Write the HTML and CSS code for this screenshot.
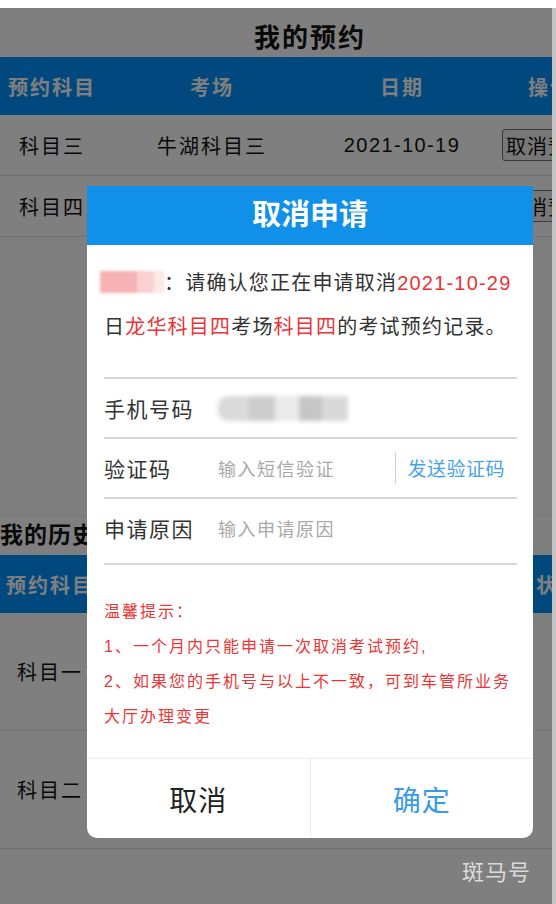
FILE: index.html
```html
<!DOCTYPE html>
<html lang="zh-CN">
<head>
<meta charset="utf-8">
<title>我的预约</title>
<link rel="stylesheet" href="styles.css">
</head>
<body>
<div class="page">
  <div class="content">
    <h2 class="title">我的预约</h2>
    <div class="grid grid-now head">
      <div>预约科目</div><div>考场</div><div>日期</div><div>操作</div>
    </div>
    <div class="grid grid-now row">
      <div>科目三</div><div>牛湖科目三</div><div class="num">2021-10-19</div><div class="op"><button class="btn">取消预约</button></div>
    </div>
    <div class="grid grid-now row">
      <div>科目四</div><div>龙华科目四</div><div class="num">2021-10-29</div><div class="op"><button class="btn">取消预约</button></div>
    </div>

    <section class="history">
      <h3 class="subtitle">我的历史预约</h3>
      <div class="grid grid-hist head">
        <div>预约科目</div><div>考场</div><div>日期</div><div>结果</div><div>状态</div>
      </div>
      <div class="grid grid-hist row tall">
        <div>科目一</div><div>福田科目一</div><div class="num">2021-06-12</div><div>合格</div><div></div>
      </div>
      <div class="grid grid-hist row tall">
        <div>科目二</div><div>牛湖科目二</div><div class="num">2021-08-20</div><div>合格</div><div></div>
      </div>
    </section>
  </div>

  <div class="mask"></div>

  <div class="dialog">
    <div class="dialog-head">取消申请</div>
    <div class="dialog-msg">
      <p><span class="blur-name"></span>：请确认您正在申请取消<span class="red">2021-10-29</span></p>
      <p>日<span class="red">龙华科目四</span>考场<span class="red">科目四</span>的考试预约记录。</p>
    </div>
    <div class="form">
      <div class="field">
        <span class="label">手机号码</span>
        <span class="blur-phone"></span>
      </div>
      <div class="field">
        <span class="label short">验证码</span>
        <span class="placeholder grow">输入短信验证</span>
        <span class="send">发送验证码</span>
      </div>
      <div class="field last">
        <span class="label">申请原因</span>
        <span class="placeholder">输入申请原因</span>
      </div>
    </div>
    <div class="tips">
      <p>温馨提示：</p>
      <p>1、一个月内只能申请一次取消考试预约,</p>
      <p>2、如果您的手机号与以上不一致，可到车管所业务</p>
      <p>大厅办理变更</p>
    </div>
    <div class="actions">
      <div class="act cancel">取消</div>
      <div class="act ok">确定</div>
    </div>
  </div>

  <div class="watermark">斑马号</div>
</div>
</body>
</html>
```

FILE: styles.css
```css
* { box-sizing: border-box; }
html, body { margin: 0; padding: 0; }
body {
  background: #fff;
  font-family: "Liberation Sans", "Noto Sans CJK SC", sans-serif;
  color: #222;
}
p { margin: 0; }

.page {
  position: relative;
  width: 556px;
  height: 896px;
  margin-top: 8px;
  overflow: hidden;
  background: #fff;
  border-right: 4px solid #c4c4c4;
}
.content { width: 620px; }

.title {
  margin: 0;
  padding-top: 11px;
  height: 49px;
  line-height: 38px;
  text-align: center;
  font-size: 26px;
  font-weight: bold;
  letter-spacing: 2px;
  color: #111;
}

.grid { display: grid; align-items: center; }
.grid > div { text-align: center; white-space: nowrap; }
.grid-now { grid-template-columns: 104px 216px 164px 132px; }
.grid-hist { grid-template-columns: 100px 150px 150px 100px 116px; }

.head {
  height: 58px;
  background: #0090fa;
  color: #fff;
  font-size: 20px;
  font-weight: bold;
  letter-spacing: 2px;
}
.row {
  height: 61px;
  border-bottom: 1px solid #e4e4e4;
  font-size: 20px;
  letter-spacing: 2px;
  color: #111;
}
.row .num { letter-spacing: 1.4px; }
.row.tall { height: 118px; }
.grid > .op { text-align: left; padding-left: 18px; }
.btn {
  height: 32px;
  padding: 0 3px;
  font: inherit;
  font-size: 20px;
  letter-spacing: 1px;
  color: #111;
  background: #efefef;
  border: 1px solid #767676;
  border-radius: 3px;
}

.history {
  margin-top: 278px;
  border-top: 1px solid #eaeaea;
}
.subtitle {
  margin: 0;
  height: 39px;
  line-height: 39px;
  font-size: 23px;
  font-weight: bold;
  letter-spacing: 1px;
  color: #111;
}

.mask {
  position: absolute;
  inset: 0;
  background: rgba(0, 0, 0, 0.5);
}

.dialog {
  position: absolute;
  left: 87px;
  top: 178px;
  width: 446px;
  background: #fff;
  border-radius: 0 0 10px 10px;
  overflow: hidden;
}
.dialog-head {
  height: 59px;
  line-height: 59px;
  text-align: center;
  background: #1190ea;
  color: #fff;
  font-size: 29px;
  font-weight: bold;
}
.dialog-msg {
  padding: 16px 10px 0 17px;
  font-size: 20px;
  line-height: 44px;
  letter-spacing: 1.2px;
  color: #333;
  white-space: nowrap;
}
.red { color: #ec3337; }
.blur-name {
  display: inline-block;
  width: 64px;
  height: 22px;
  margin-left: -4px;
  vertical-align: -3px;
  background: linear-gradient(90deg, #f6b2b5 0 58%, #fad0d1 58% 84%, #fde8e8 84%);
  filter: blur(1.5px);
}

.form { margin: 28px 16px 0 17px; }
.field {
  display: flex;
  align-items: center;
  height: 60px;
  border-top: 2px solid #d8d8d8;
}
.field.last {
  height: 68px;
  padding-bottom: 6px;
  border-bottom: 2px solid #d8d8d8;
}
.label {
  width: 114px;
  flex: none;
  font-size: 21px;
  letter-spacing: 1.5px;
  color: #333;
}
.placeholder {
  font-size: 18px;
  letter-spacing: 1.5px;
  color: #a9a9a9;
}
.grow { flex: 1; }
.send {
  height: 32px;
  line-height: 32px;
  padding: 0 12px 2px 11px;
  border-left: 1px solid #cfcfcf;
  font-size: 19px;
  letter-spacing: 0.5px;
  color: #45a3ea;
}
.send { line-height: 36px; }
.blur-phone {
  display: inline-block;
  width: 130px;
  height: 25px;
  border-radius: 10px 0 0 10px;
  background: linear-gradient(90deg, #dadada 0 24%, #cdcdcd 24% 44%, #ebebeb 44% 62%, #c6c6c6 62% 80%, #d9d9d9 80%);
  filter: blur(2px);
}

.tips {
  padding: 29px 10px 24px 17px;
  font-size: 16px;
  line-height: 35px;
  letter-spacing: 2px;
  color: #ef3434;
  white-space: nowrap;
}

.actions {
  display: flex;
  height: 80px;
  border-top: 1px solid #ededed;
}
.act {
  flex: 1;
  display: flex;
  align-items: center;
  justify-content: center;
  font-size: 28px;
  letter-spacing: 1px;
}
.cancel { color: #222; border-right: 1px solid #ededed; }
.ok { color: #3b9ae6; }

.watermark {
  position: absolute;
  left: 462px;
  top: 852px;
  font-size: 22px;
  line-height: 26px;
  letter-spacing: 1px;
  color: rgba(255, 255, 255, 0.72);
}
```
